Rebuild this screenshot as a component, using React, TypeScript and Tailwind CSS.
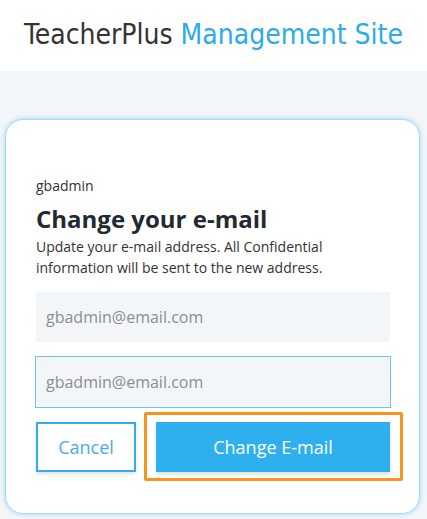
import React from "react";

export default function App() {
  return (
    <div className="min-h-[519px] bg-[#f3f6f9]" style={{ fontFamily: '"Open Sans", sans-serif' }}>
      <header className="h-[71px] bg-white flex items-center justify-center">
        <h1
          className="text-[28px] leading-none tracking-[0px] mt-[-2px]"
          style={{ fontFamily: '"DejaVu Sans Condensed", "DejaVu Sans", sans-serif' }}
        >
          <span className="text-[#333333]">TeacherPlus</span>{" "}
          <span className="text-[#2eaaea]">Management Site</span>
        </h1>
      </header>
      <div className="pt-[48px] pb-[7px]">
        <div className="ml-[5px] mr-[7px] bg-white rounded-[18px] border border-[#a8dbf5] shadow-[0_0_5px_rgba(60,170,235,0.45)] pl-[30px] pr-[29px] pt-[56px] pb-[41px]">
          <div className="text-[14px] leading-[20px] text-[#333]">gbadmin</div>
          <h2 className="text-[24px] font-bold leading-[30px] text-[#1f2a33] mt-[8px]">Change your e-mail</h2>
          <p className="text-[14px] leading-[21px] text-[#333] mt-[2px]">
            Update your e-mail address. All Confidential
            <br />
            information will be sent to the new address.
          </p>
          <div className="mt-[14px] h-[50px] bg-[#f3f6f9] flex items-center pl-[10px] text-[16px] text-[#8a8e92]">
            gbadmin@email.com
          </div>
          <div className="mt-[14px] mx-[-1px] h-[52px] bg-[#f3f6f9] border border-[#6cc4f0] flex items-center pl-[10px] text-[16px] text-[#8a8e92]">
            gbadmin@email.com
          </div>
          <div className="mt-[14px] flex gap-[20px]">
            <button className="w-[100px] h-[50px] border-2 border-[#2eaeee] text-[#4da9ea] text-[18px] bg-white shadow-[0_2px_4px_rgba(0,0,0,0.12)]">
              Cancel
            </button>
            <div className="relative flex-1">
              <button className="w-full h-[50px] bg-[#2eb0ef] text-white text-[18px] shadow-[0_2px_4px_rgba(0,0,0,0.15)]">
                Change E-mail
              </button>
              <div className="absolute left-[-12px] right-[-13px] top-[-10px] bottom-[-9px] border-[3px] border-[#f7941d] rounded-[2px] pointer-events-none" />
            </div>
          </div>
        </div>
      </div>
    </div>
  );
}
